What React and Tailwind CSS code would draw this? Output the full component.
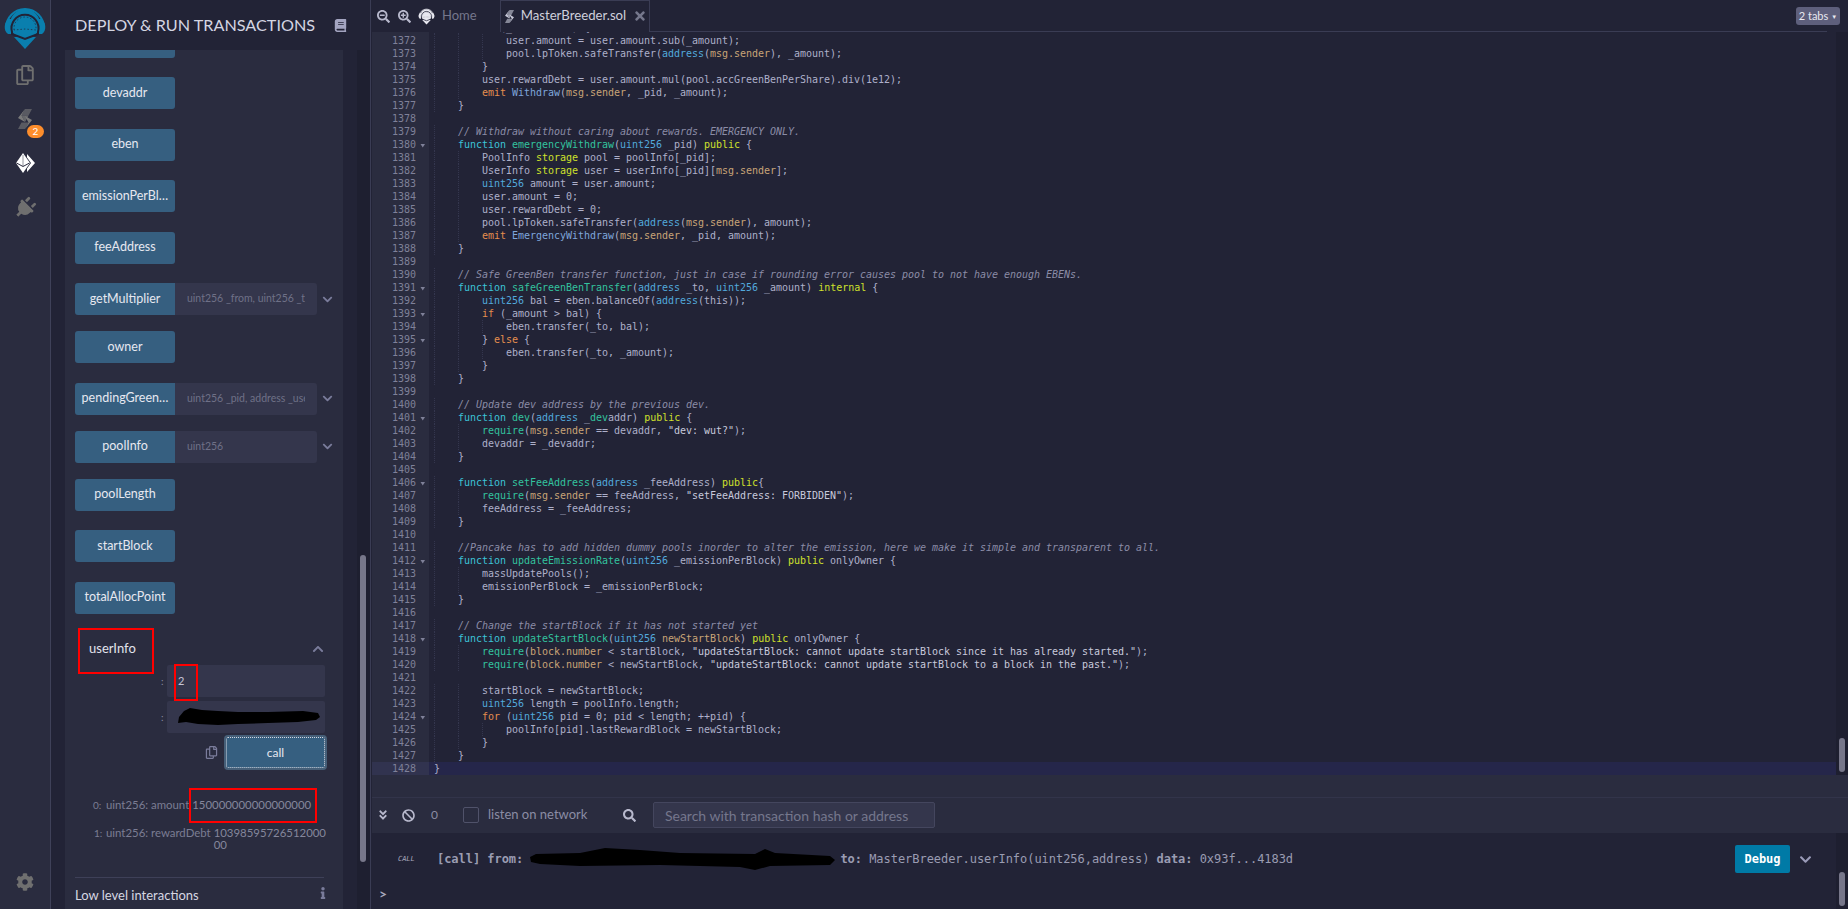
import React from "react";
import { FaRegCopy, FaPlug, FaCog, FaBook, FaChevronDown, FaChevronUp, FaInfo, FaSearchMinus, FaSearchPlus, FaTimes, FaAngleDoubleDown, FaBan, FaSearch } from "react-icons/fa";

const CODE = `        if (_amount > 0) {
            user.amount = user.amount.sub(_amount);
            pool.lpToken.safeTransfer(address(msg.sender), _amount);
        }
        user.rewardDebt = user.amount.mul(pool.accGreenBenPerShare).div(1e12);
        emit Withdraw(msg.sender, _pid, _amount);
    }

    // Withdraw without caring about rewards. EMERGENCY ONLY.
    function emergencyWithdraw(uint256 _pid) public {
        PoolInfo storage pool = poolInfo[_pid];
        UserInfo storage user = userInfo[_pid][msg.sender];
        uint256 amount = user.amount;
        user.amount = 0;
        user.rewardDebt = 0;
        pool.lpToken.safeTransfer(address(msg.sender), amount);
        emit EmergencyWithdraw(msg.sender, _pid, amount);
    }

    // Safe GreenBen transfer function, just in case if rounding error causes pool to not have enough EBENs.
    function safeGreenBenTransfer(address _to, uint256 _amount) internal {
        uint256 bal = eben.balanceOf(address(this));
        if (_amount > bal) {
            eben.transfer(_to, bal);
        } else {
            eben.transfer(_to, _amount);
        }
    }

    // Update dev address by the previous dev.
    function dev(address _devaddr) public {
        require(msg.sender == devaddr, "dev: wut?");
        devaddr = _devaddr;
    }

    function setFeeAddress(address _feeAddress) public{
        require(msg.sender == feeAddress, "setFeeAddress: FORBIDDEN");
        feeAddress = _feeAddress;
    }

    //Pancake has to add hidden dummy pools inorder to alter the emission, here we make it simple and transparent to all.
    function updateEmissionRate(uint256 _emissionPerBlock) public onlyOwner {
        massUpdatePools();
        emissionPerBlock = _emissionPerBlock;
    }

    // Change the startBlock if it has not started yet
    function updateStartBlock(uint256 newStartBlock) public onlyOwner {
        require(block.number < startBlock, "updateStartBlock: cannot update startBlock since it has already started.");
        require(block.number < newStartBlock, "updateStartBlock: cannot update startBlock to a block in the past.");

        startBlock = newStartBlock;
        uint256 length = poolInfo.length;
        for (uint256 pid = 0; pid < length; ++pid) {
            poolInfo[pid].lastRewardBlock = newStartBlock;
        }
    }
}`.split("\n");

const TOKEN = /(\/\/.*$)|("[^"]*")|\b(function)\b|\b(require)\b|\b(emit|if|else|for)\b|\b(public|internal|storage)\b|\b(uint256|address)\b|(msg\.sender|block\.number)/g;
const STYLE = {
  1: "italic text-[#8b8ca6]",
  2: "text-[#c8c9dc]",
  3: "text-[#3cc4d8]",
  4: "text-[#33c29e]",
  5: "text-[#e58e4e]",
  6: "text-[#cfe02c]",
  7: "text-[#52a9dc]",
  8: "text-[#c9a477]",
};

function tokenize(line) {
  const out = [];
  let last = 0;
  const fn = line.match(/function (\w+)/);
  const ev = line.match(/emit (\w+)/);
  const param = line.includes("uint256 newStartBlock");
  let k = 0;
  const pushPlain = (s) => {
    if (!s) return;
    let rest = s;
    const special = [
      fn && [fn[1], "text-[#33c29e]"],
      ev && [ev[1], "text-[#7fa6dc]"],
      param && ["newStartBlock", "text-[#c9a477]"],
    ].filter(Boolean);
    for (const [word, cls] of special) {
      const i = rest.indexOf(word);
      if (i >= 0) {
        out.push(<span key={k++}>{rest.slice(0, i)}</span>);
        out.push(<span key={k++} className={cls}>{word}</span>);
        rest = rest.slice(i + word.length);
      }
    }
    out.push(<span key={k++}>{rest}</span>);
  };
  for (const m of line.matchAll(TOKEN)) {
    pushPlain(line.slice(last, m.index));
    const g = [1, 2, 3, 4, 5, 6, 7, 8].find((n) => m[n] !== undefined);
    out.push(<span key={k++} className={STYLE[g]}>{m[0]}</span>);
    last = m.index + m[0].length;
  }
  pushPlain(line.slice(last));
  return out;
}

function CodeLine({ n, text }) {
  const active = n === 1428;
  const fold = /\{$/.test(text) && n !== 1371;
  const indent = text.match(/^ */)[0].length;
  const guides = Math.floor(indent / 4);
  return (
    <div className={`flex h-[13px] leading-[13px] ${active ? "bg-[#25264a]" : ""}`}>
      <div className={`flex w-[57px] shrink-0 ${active ? "bg-[#31334f]" : "bg-[#2a2c3f]"}`}>
        <span className="w-[44px] text-right text-[#7f8199]">{n}</span>
        {fold && (
          <svg width="6" height="13" viewBox="0 0 6 13" className="ml-[4px]">
            <path d="M0.5 6 L5 6 L2.75 9.5 Z" fill="#7f8199" />
          </svg>
        )}
      </div>
      <div className="ml-[5px] whitespace-pre tracking-[-0.02px]">
        {Array.from({ length: guides }).map((_, i) => (
          <span key={i} className="inline-block h-[13px] w-[24px] border-l border-dotted border-[#34364e] align-top" />
        ))}
        {tokenize(text.slice(guides * 4))}
      </div>
    </div>
  );
}

function Logo({ color = "#0a7fae", dark = "#222336", size = 44 }) {
  return (
    <svg width={size} height={size} viewBox="0 0 44 44">
      <path d="M3 22 C3 12 11 3 22 3 C33 3 41 12 41 22" fill="none" stroke={color} strokeWidth="2" />
      <path d="M6 13 C1 15 0 25 5 28 L8 28 L8 13 Z" fill={color} />
      <path d="M38 13 C43 15 44 25 39 28 L36 28 L36 13 Z" fill={color} />
      <circle cx="22" cy="18" r="15" fill={color} />
      <path d="M22 43 L11 31 L33 31 Z" fill={color} />
      <path d="M9 26 A13.5 13.5 0 1 1 35 26 L35 28 L22 33 L9 28 Z" fill="none" stroke={dark} strokeWidth="2" />
      <path d="M11 24 L11 22 A11 11 0 0 1 33 22 L33 24 L22 23 Z" fill={color} stroke={dark} strokeWidth="0.7" strokeDasharray="1.5 2" />
    </svg>
  );
}

function SolidityIcon({ color = "#7a7a7a", w = 14, h = 20 }) {
  return (
    <svg width={w} height={h} viewBox="0 0 14 20">
      <path d="M7 0 L14 0 L10.5 6.5 L3.5 6.5 Z" fill={color} opacity="0.6" />
      <path d="M7 0 L3.5 6.5 L7 13 L0 9 Z" fill={color} />
      <path d="M3.5 6.5 L10.5 6.5 L7 13 Z" fill={color} opacity="0.75" />
      <path d="M7 20 L0 20 L3.5 13.5 L10.5 13.5 Z" fill={color} opacity="0.6" />
      <path d="M7 20 L10.5 13.5 L7 7 L14 11 Z" fill={color} />
    </svg>
  );
}

function DeployIcon() {
  return (
    <svg width="20" height="20" viewBox="0 0 20 20">
      <path d="M8 0 L1 10 L8 20 L15 10 Z" fill="#fff" />
      <path d="M1.5 10 L8 13.5 L14.5 10" fill="none" stroke="#2a2c3f" strokeWidth="1" />
      <path d="M8 2 L8 13" fill="none" stroke="#2a2c3f" strokeWidth="0.5" />
      <path d="M12 1 L20 10 L12 19 L12 15.5 L16 10 L12 4.5 Z" fill="#fff" />
    </svg>
  );
}

function Scribble({ w, h, d }) {
  return (
    <svg width={w} height={h} viewBox={`0 0 ${w} ${h}`} className="shrink-0">
      <path d={d} fill="#000" />
    </svg>
  );
}

function Btn({ label }) {
  return (
    <div className="flex h-[32px] w-[100px] shrink-0 items-center justify-center rounded-[3px] bg-[#365f80] text-[12.5px] text-[#e6e8f0]">
      {label}
    </div>
  );
}

function PlainRow({ label }) {
  return (
    <div className="mb-[19.5px]">
      <Btn label={label} />
    </div>
  );
}

function InputRow({ label, hint }) {
  return (
    <div className="mb-[16px] flex items-center">
      <div className="flex h-[32px] w-[100px] shrink-0 items-center justify-center rounded-l-[3px] bg-[#365f80] text-[12.5px] text-[#e6e8f0]">
        {label}
      </div>
      <div className="flex h-[32px] w-[142px] items-center rounded-r-[3px] bg-[#34364c] pl-[12px] pr-[12px]">
        <span className="overflow-hidden whitespace-nowrap text-[10.5px] text-[#6f7187]">{hint}</span>
      </div>
      <FaChevronDown className="ml-[5px] text-[#7a7c9b]" size={11} />
    </div>
  );
}

function IconRail() {
  return (
    <div className="flex h-full w-[51px] shrink-0 flex-col items-center border-r border-[#3f4159] bg-[#2a2c3f]">
      <div className="mt-[6px] h-[44px]"><Logo /></div>
      <div className="mt-[15px] h-[20px]"><FaRegCopy size={20} className="text-[#6f6f6f]" /></div>
      <div className="relative mt-[24px] h-[20px]">
        <SolidityIcon />
        <span className="absolute left-[9px] top-[16px] flex h-[13px] w-[17px] items-center justify-center rounded-full bg-[#fd8e2c] text-[10px] text-white">2</span>
      </div>
      <div className="mt-[24px] h-[20px]"><DeployIcon /></div>
      <div className="mt-[24px] h-[20px]"><FaPlug size={22} className="rotate-45 text-[#6f6f6f]" /></div>
      <div className="mb-[18px] mt-auto"><FaCog size={18} className="text-[#6f6f6f]" /></div>
    </div>
  );
}

function Sidebar() {
  return (
    <div className="flex h-full w-[319px] shrink-0 flex-col bg-[#222336]">
      <div className="flex h-[50px] shrink-0 items-center pl-[24px]">
        <span className="w-[259px] whitespace-nowrap text-[16.2px] text-[#d4d5e2]">DEPLOY &amp; RUN TRANSACTIONS</span>
        <FaBook size={13} className="text-[#a3a4c0]" />
      </div>
      <div className="flex min-h-0 flex-1">
        <div className="ml-[14px] w-[278px] overflow-hidden bg-[#2a2c3f] pl-[10px]">
          <div className="mt-[-24.5px]">
            <PlainRow label="dev" />
            <PlainRow label="devaddr" />
            <PlainRow label="eben" />
            <PlainRow label="emissionPerBl…" />
            <PlainRow label="feeAddress" />
            <InputRow label="getMultiplier" hint="uint256 _from, uint256 _to" />
            <PlainRow label="owner" />
            <InputRow label="pendingGreen…" hint="uint256 _pid, address _user" />
            <InputRow label="poolInfo" hint="uint256" />
            <PlainRow label="poolLength" />
            <PlainRow label="startBlock" />
            <PlainRow label="totalAllocPoint" />

            <div className="flex h-[32px] items-center pl-[14px] pr-[19px]">
              <span className="flex-1 text-[13px] text-[#e2e3ec]">userInfo</span>
              <FaChevronUp size={12} className="text-[#7a7c9b]" />
            </div>
            <div className="ml-[86px] flex h-[32px] items-center">
              <span className="w-[6px] text-[10px] text-[#8a8ca4]">:</span>
              <div className="flex h-[32px] w-[158px] items-center rounded-[2px] bg-[#34364c] pl-[11px] text-[11px] text-[#c4c5d8]">2</div>
            </div>
            <div className="ml-[86px] mt-[4px] flex h-[32px] items-center">
              <span className="w-[6px] text-[10px] text-[#8a8ca4]">:</span>
              <div className="flex h-[32px] w-[158px] items-center rounded-[2px] bg-[#34364c] pl-[11px]">
                <Scribble w={142} h={18} d="M1 9 L6 3 L12 0 L24 2 L40 3 L60 4 L90 4 L125 3 L140 5 L142 9 L138 12 L120 14 L90 15 L60 16 L40 17 L20 16 L8 14 L0 15 Z" />
              </div>
            </div>
            <div className="mt-[2px] flex h-[35px] items-center">
              <FaRegCopy size={13} className="ml-[130px] mr-[6px] text-[#7a7c9b]" />
              <div className="h-[35px] w-[103px] rounded-[4px] border-2 border-[#465f78]">
                <div className="flex h-full items-center justify-center rounded-[2px] border border-dotted border-[#d6d8e0] bg-[#365f80] text-[12px] text-[#e6e8f0]">call</div>
              </div>
            </div>
            <div className="mt-[28px] flex h-[14px] items-center pl-[18px] text-[11.4px] leading-[14px] text-[#7b7d93]">
              <span className="w-[13px] text-[10px]">0:</span>
              <span className="whitespace-nowrap">uint256: amount</span>
              <span className="ml-[3px] whitespace-nowrap text-[#85879c]">150000000000000000</span>
            </div>
            <div className="mt-[15px] flex pl-[19px] text-[11.4px] leading-[12px] text-[#7b7d93]">
              <span className="w-[12px] text-[10px]">1:</span>
              <span className="whitespace-nowrap">uint256: rewardDebt</span>
              <span className="ml-[3px] w-[114px] break-all text-[#85879c]">1039859572651200000</span>
            </div>
            <div className="mt-[26px] w-[249px] border-t border-[#3e4058]" />
            <div className="flex h-[36px] w-[254px] items-center justify-between">
              <span className="text-[13px] text-[#d6d7e2]">Low level interactions</span>
              <FaInfo size={12} className="mb-[6px] text-[#7a7c9b]" />
            </div>
          </div>
        </div>
        <div className="ml-[14px] w-[13px] bg-[#1e1f30] pl-[3px]">
          <div className="mt-[505px] h-[307px] w-[6px] rounded-full bg-[#77778a]" />
        </div>
      </div>
    </div>
  );
}

function TopBar() {
  return (
    <div className="flex h-[32px] shrink-0 items-center">
      <FaSearchMinus size={13} className="ml-[5px] text-[#b8b9cd]" />
      <FaSearchPlus size={13} className="ml-[8px] text-[#b8b9cd]" />
      <div className="ml-[7px] flex h-[16px] w-[17px] items-center justify-center"><Logo color="#e8e8f0" dark="#222336" size={17} /></div>
      <span className="ml-[7px] text-[13px] text-[#75778c]">Home</span>
      <div className="ml-[23px] flex h-[32px] w-[150px] items-center border-x border-t border-[#3a3c54] pl-[4px] pb-[1px]">
        <SolidityIcon color="#c8c9d8" w={9} h={13} />
        <span className="ml-[7px] w-[106px] whitespace-nowrap text-[13.2px] text-[#cfd0dc]">MasterBreeder.sol</span>
        <FaTimes size={14} className="ml-[6px] text-[#75778c]" />
      </div>
      <div className="flex h-[32px] flex-1 items-center border-b border-[#3a3c54]">
      </div>
      <div className="flex h-[32px] w-[21px] items-center" />
    </div>
  );
}

function Main() {
  return (
    <div className="relative flex h-full min-w-0 flex-1 flex-col border-l border-[#3a3c54] bg-[#222336]">
      <div className="pl-[1px]"><TopBar /></div>
      <div className="absolute right-[8px] top-[7px] flex h-[18px] w-[44px] items-center justify-center rounded-[3px] bg-[#5e5f7c] text-[11px] text-[#e8e8f0]">
        2 tabs<span className="ml-[3px] text-[6px]">▼</span>
      </div>
      <div className="flex h-[743px] shrink-0 overflow-hidden pl-[1px]">
        <div className="min-w-0 flex-1 overflow-hidden bg-[#222336] font-['DejaVu_Sans_Mono',monospace] text-[10px] text-[#aeb0ca]">
          <div className="mt-[-11px]">
            {CODE.map((t, i) => <CodeLine key={i} n={1371 + i} text={t} />)}
          </div>
        </div>
        <div className="w-[12px] shrink-0 bg-[#1e1f30] pl-[3px]">
          <div className="mt-[706px] h-[34px] w-[6px] rounded-full bg-[#77778a]" />
        </div>
      </div>
      <div className="ml-[1px] h-[23px] shrink-0 border-b border-[#32344a] bg-[#2a2c3f]" />
      <div className="ml-[1px] flex h-[35px] shrink-0 items-center bg-[#2a2c3f] pb-[1px]">
        <FaAngleDoubleDown size={12} className="ml-[5px] text-[#b8b9cd]" />
        <FaBan size={13} className="ml-[13px] text-[#b8b9cd]" />
        <span className="ml-[16px] text-[12px] text-[#8a8ca4]">0</span>
        <div className="ml-[25px] h-[16px] w-[16px] rounded-[2px] border border-[#50526a]" />
        <span className="ml-[9px] w-[135px] text-[13px] text-[#8a8ca4]">listen on network</span>
        <FaSearch size={13} className="text-[#b8b9cd]" />
        <div className="ml-[17px] flex h-[26px] w-[282px] items-center rounded-[2px] border border-[#44465e] bg-[#34364c] pl-[11px] text-[14px] text-[#75778c]">
          Search with transaction hash or address
        </div>
      </div>
      <div className="flex min-h-0 flex-1">
        <div className="flex min-w-0 flex-1 flex-col">
          <div className="mt-[12px] flex h-[28px] items-center font-['DejaVu_Sans_Mono',monospace] text-[12px] tracking-[-0.04px] text-[#9a9cb2]">
            <span className="ml-[27px] w-[39px] text-[7px] italic text-[#a8a9bd]">CALL</span>
            <span className="whitespace-pre font-bold">[call] from: </span>
            <Scribble w={310} h={22} d="M0 9 L6 6 L50 5 L75 0 L110 2 L150 5 L225 6 L235 1 L245 5 L300 8 L305 12 L300 17 L240 18 L225 22 L210 19 L130 17 L50 18 L10 16 L1 14 Z" />
            <span className="whitespace-pre font-bold">to: </span>
            <span className="whitespace-pre">MasterBreeder.userInfo(uint256,address) </span>
            <span className="whitespace-pre font-bold">data: </span>
            <span className="whitespace-pre">0x93f...4183d</span>
            <div className="ml-auto flex h-[28px] w-[55px] items-center justify-center rounded-[2px] bg-[#007aa6] font-bold text-white">Debug</div>
            <FaChevronDown size={13} className="ml-[9px] mr-[24px] text-[#9a9bb8]" />
          </div>
          <span className="ml-[8px] mt-[13px] text-[14px] font-bold leading-[16px] text-[#a8a9bd]">&gt;</span>
        </div>
        <div className="w-[12px] shrink-0 bg-[#1e1f30] pl-[3px]">
          <div className="mt-[39px] h-[34px] w-[6px] rounded-full bg-[#77778a]" />
        </div>
      </div>
    </div>
  );
}

export default function App() {
  return (
    <div className="relative flex h-[909px] w-[1848px] overflow-hidden bg-[#222336] font-['Lato',sans-serif]">
      <IconRail />
      <Sidebar />
      <Main />
      <div className="absolute left-[78px] top-[628px] h-[46px] w-[76px] border-2 border-[#ff0000]" />
      <div className="absolute left-[174px] top-[664px] h-[37px] w-[24px] border-2 border-[#ff0000]" />
      <div className="absolute left-[189px] top-[788px] h-[35px] w-[128px] border-2 border-[#ff0000]" />
    </div>
  );
}
